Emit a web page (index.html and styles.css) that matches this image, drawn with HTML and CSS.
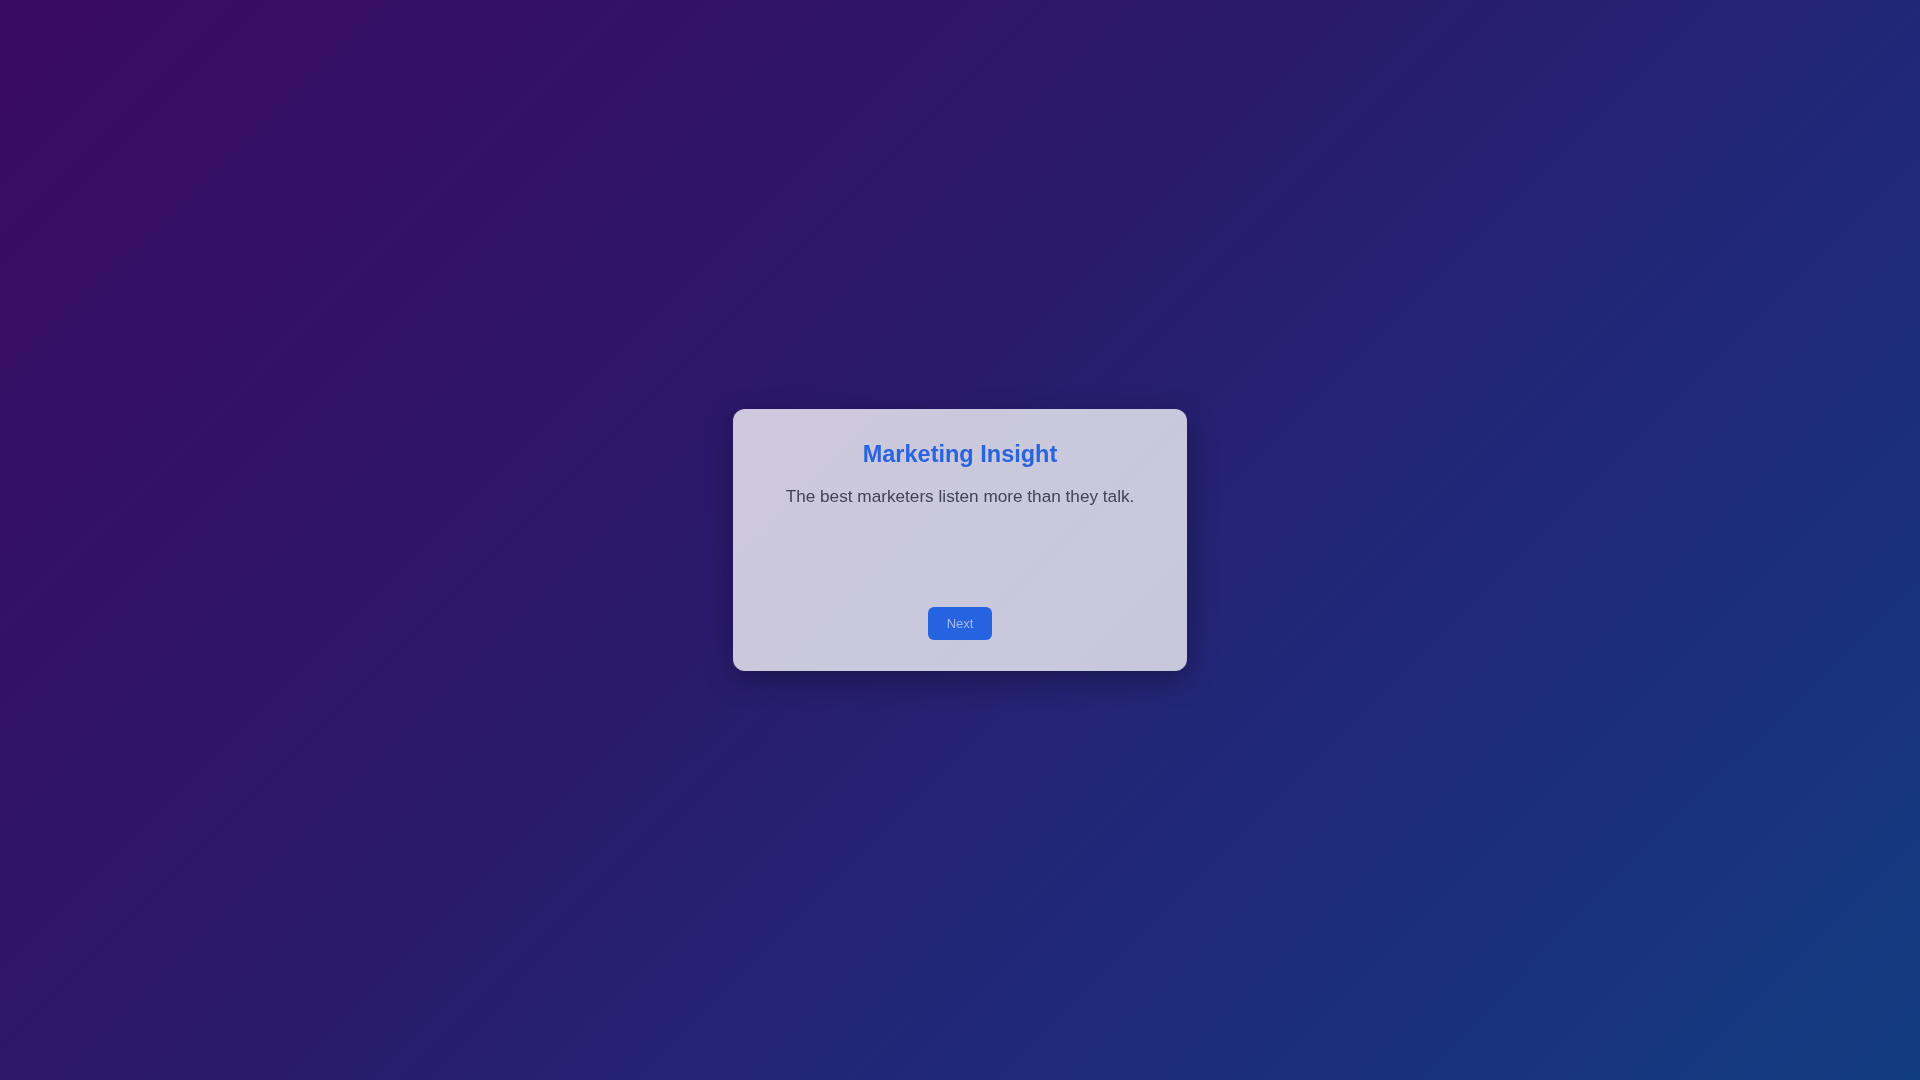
FILE: index.html
```html
<!DOCTYPE html>
<html lang="en">
<head>
<meta charset="utf-8">
<title>Marketing Insight</title>
<link rel="stylesheet" href="styles.css">
</head>
<body>
  <main class="card">
    <h2 class="card-title">Marketing Insight</h2>
    <p class="card-text">The best marketers listen more than they talk.</p>
    <button class="next-btn" type="button">Next</button>
  </main>
</body>
</html>
```

FILE: styles.css
```css
html, body {
  margin: 0;
  padding: 0;
}

body {
  min-height: 100vh;
  display: flex;
  align-items: center;
  justify-content: center;
  background: linear-gradient(135deg, #3a0a62 0%, #2b196b 42%, #1f2a7a 70%, #123c80 100%);
  font-family: "Liberation Sans", Arial, sans-serif;
}

.card {
  box-sizing: border-box;
  width: 454px;
  min-height: 262px;
  padding: 31px 30px 31px;
  display: flex;
  flex-direction: column;
  align-items: center;
  text-align: center;
  background: linear-gradient(135deg, rgba(255, 255, 255, 0.77), rgba(255, 255, 255, 0.75));
  border-radius: 12px;
  box-shadow: 0 8px 30px rgba(0, 0, 0, 0.3);
  filter: blur(0.3px);
}

.card-title {
  margin: 0 0 18px;
  font-size: 23.5px;
  font-weight: 700;
  line-height: 28px;
  color: #2864df;
}

.card-text {
  margin: 0;
  font-size: 17.2px;
  line-height: 21px;
  color: #434355;
}

.next-btn {
  margin-top: auto;
  padding: 9px 19px;
  border: none;
  border-radius: 6px;
  background: #2563e0;
  color: #aabbee;
  font-family: "Liberation Sans", Arial, sans-serif;
  font-size: 13px;
  line-height: 15px;
  cursor: pointer;
}
```
